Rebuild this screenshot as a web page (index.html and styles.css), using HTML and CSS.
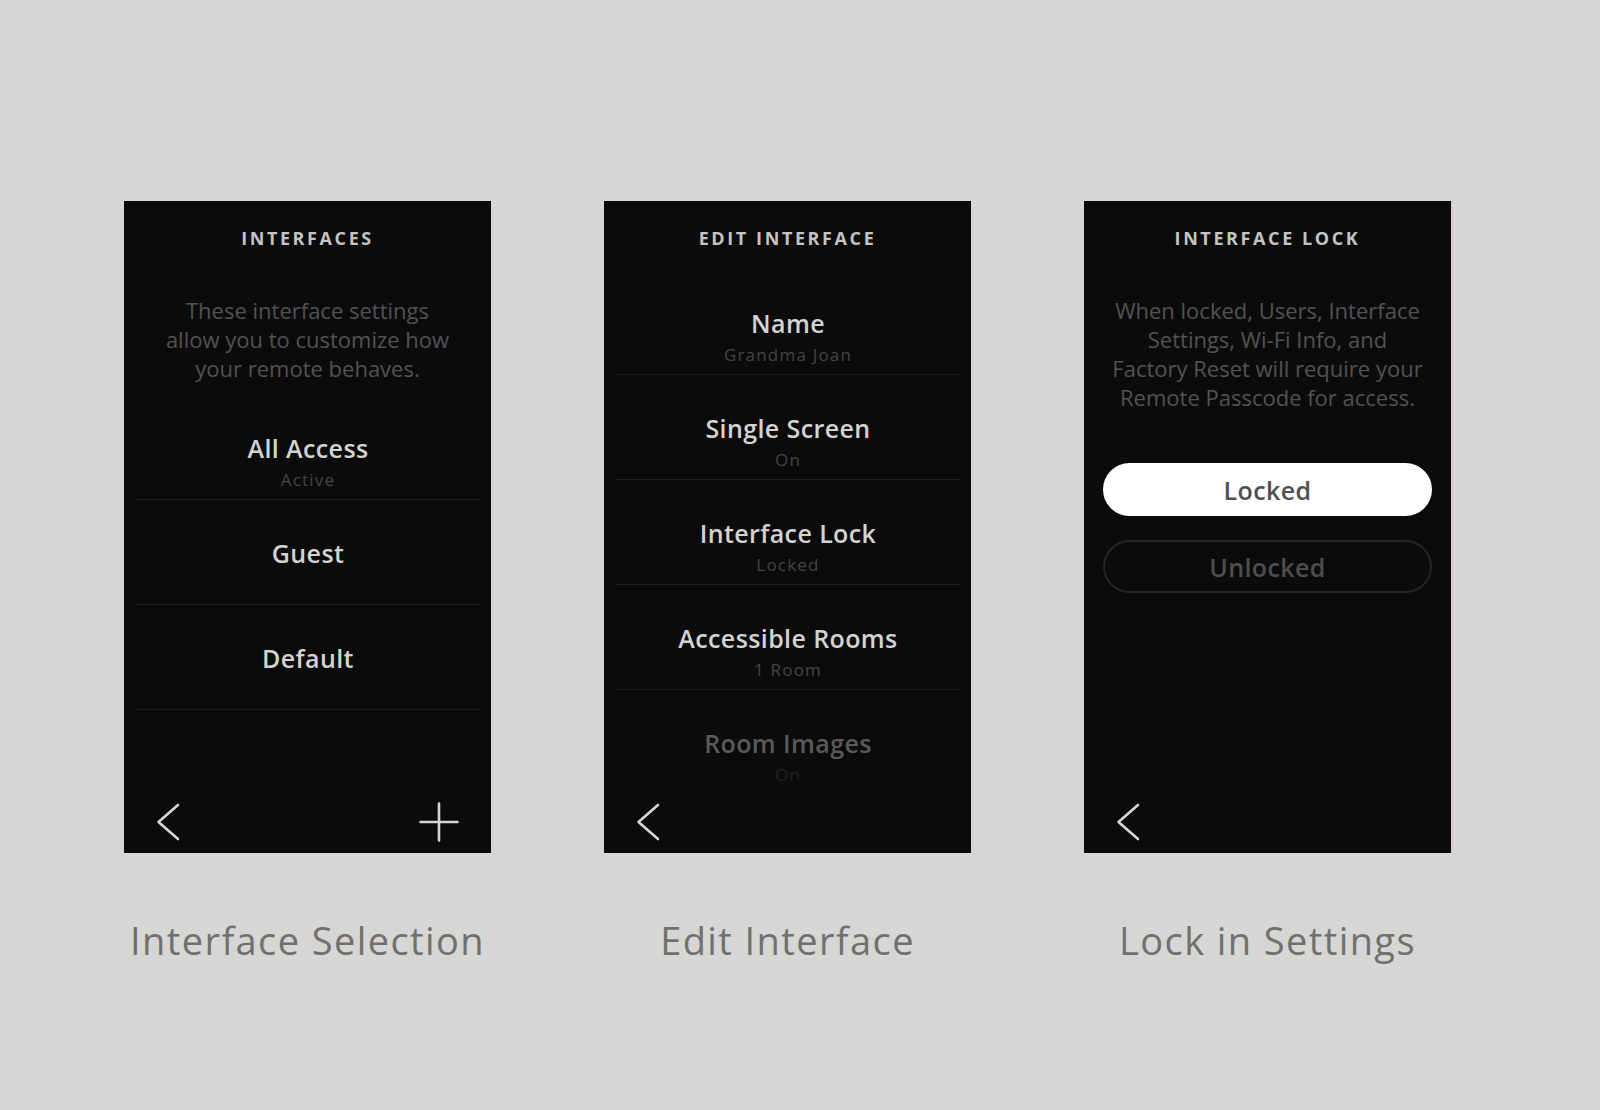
FILE: index.html
```html
<!DOCTYPE html>
<html lang="en">
<head>
<meta charset="utf-8">
<title>Remote Interfaces</title>
<link rel="stylesheet" href="styles.css">
</head>
<body>
<main class="board">

  <figure class="panel">
    <div class="screen">
      <h2 class="screen-title">INTERFACES</h2>
      <p class="screen-note">These interface settings<br>allow you to customize how<br>your remote behaves.</p>
      <ul class="menu menu-after-note">
        <li class="menu-item"><span class="item-name">All Access</span><span class="item-value">Active</span></li>
        <li class="menu-item"><span class="item-name">Guest</span></li>
        <li class="menu-item"><span class="item-name">Default</span></li>
      </ul>
      <div class="screen-foot">
        <svg class="icon-back" width="24" height="38" viewBox="0 0 24 38"><path d="M22 2 L2.5 19 L22 36"/></svg>
        <svg class="icon-add" width="40" height="40" viewBox="0 0 40 40"><path d="M20 1.5 V38.5 M1.5 20 H38.5"/></svg>
      </div>
    </div>
    <figcaption class="caption">Interface Selection</figcaption>
  </figure>

  <figure class="panel">
    <div class="screen">
      <h2 class="screen-title">EDIT INTERFACE</h2>
      <ul class="menu menu-after-title">
        <li class="menu-item"><span class="item-name">Name</span><span class="item-value">Grandma Joan</span></li>
        <li class="menu-item"><span class="item-name">Single Screen</span><span class="item-value">On</span></li>
        <li class="menu-item"><span class="item-name">Interface Lock</span><span class="item-value">Locked</span></li>
        <li class="menu-item"><span class="item-name">Accessible Rooms</span><span class="item-value">1 Room</span></li>
        <li class="menu-item menu-item-fade"><span class="item-name">Room Images</span><span class="item-value">On</span></li>
      </ul>
      <div class="screen-foot">
        <svg class="icon-back" width="24" height="38" viewBox="0 0 24 38"><path d="M22 2 L2.5 19 L22 36"/></svg>
      </div>
    </div>
    <figcaption class="caption">Edit Interface</figcaption>
  </figure>

  <figure class="panel">
    <div class="screen screen-edge">
      <h2 class="screen-title">INTERFACE LOCK</h2>
      <p class="screen-note">When locked, Users, Interface<br>Settings, Wi-Fi Info, and<br>Factory Reset will require your<br>Remote Passcode for access.</p>
      <div class="choices">
        <div class="choice choice-on">Locked</div>
        <div class="choice choice-off">Unlocked</div>
      </div>
      <div class="screen-foot">
        <svg class="icon-back" width="24" height="38" viewBox="0 0 24 38"><path d="M22 2 L2.5 19 L22 36"/></svg>
      </div>
    </div>
    <figcaption class="caption">Lock in Settings</figcaption>
  </figure>

</main>
</body>
</html>
```

FILE: styles.css
```css
html, body {
  margin: 0;
  padding: 0;
}

body {
  background: #d6d6d4;
  font-family: "Open Sans", "Liberation Sans", sans-serif;
  width: 1600px;
  height: 1110px;
  overflow: hidden;
}

.board {
  display: flex;
  gap: 113px;
  padding: 201px 0 0 124px;
}

.panel {
  margin: 0;
  width: 367px;
  display: flex;
  flex-direction: column;
}

/* dark device screen */
.screen {
  height: 652px;
  background: #0c0b0b;
  display: flex;
  flex-direction: column;
  overflow: hidden;
  text-align: center;
  padding-top: 25px;
  box-sizing: border-box;
}

.screen-edge {
  box-shadow: 2px 0 0 #dcc7cf;
}

.screen-title {
  margin: 0;
  font-size: 18px;
  line-height: 24px;
  font-weight: 700;
  letter-spacing: 2.6px;
  color: #c4c4c4;
}

.screen-note {
  margin: 46px 0 0;
  font-size: 22px;
  line-height: 29px;
  font-weight: 400;
  color: #525252;
}

/* list of settings rows */
.menu {
  list-style: none;
  margin: 0 10px 0 11px;
  padding: 0;
  flex-shrink: 0;
}

.menu-after-note {
  margin-top: 12px;
}

.menu-after-title {
  margin-top: 20px;
}

.menu-item {
  height: 105px;
  box-sizing: border-box;
  border-bottom: 1px solid #1e1e1e;
  padding-top: 38px;
  display: flex;
  flex-direction: column;
  align-items: center;
}

.item-name {
  font-size: 25px;
  line-height: 30px;
  font-weight: 600;
  letter-spacing: 0.4px;
  color: #d3d3d3;
}

.item-value {
  margin-top: 5px;
  font-size: 17px;
  line-height: 24px;
  letter-spacing: 1.2px;
  color: #444444;
}

.menu-item-fade {
  height: auto;
  border-bottom: none;
}

.menu-item-fade .item-name {
  color: #5a5a5a;
}

.menu-item-fade .item-value {
  color: #222222;
}

/* lock choices */
.choices {
  margin: 51px 19px 0;
  display: flex;
  flex-direction: column;
  gap: 24px;
}

.choice {
  height: 53px;
  box-sizing: border-box;
  border-radius: 27px;
  display: flex;
  align-items: center;
  justify-content: center;
  font-size: 25px;
  font-weight: 600;
  letter-spacing: 0.4px;
}

.choice-on {
  background: #ffffff;
  color: #505050;
}

.choice-off {
  border: 2px solid #252525;
  color: #4e4e4e;
}

/* bottom navigation */
.screen-foot {
  margin-top: auto;
  height: 62px;
  flex-shrink: 0;
  display: flex;
  align-items: center;
  justify-content: space-between;
  padding: 0 32px;
}

.screen-foot svg {
  display: block;
  fill: none;
  stroke: #d6d6d6;
  stroke-width: 2.6;
  stroke-linecap: round;
  stroke-linejoin: round;
}

.caption {
  margin-top: 65px;
  text-align: center;
  white-space: nowrap;
  font-size: 38px;
  line-height: 44px;
  font-weight: 400;
  letter-spacing: 1.4px;
  color: #72706e;
}
```
